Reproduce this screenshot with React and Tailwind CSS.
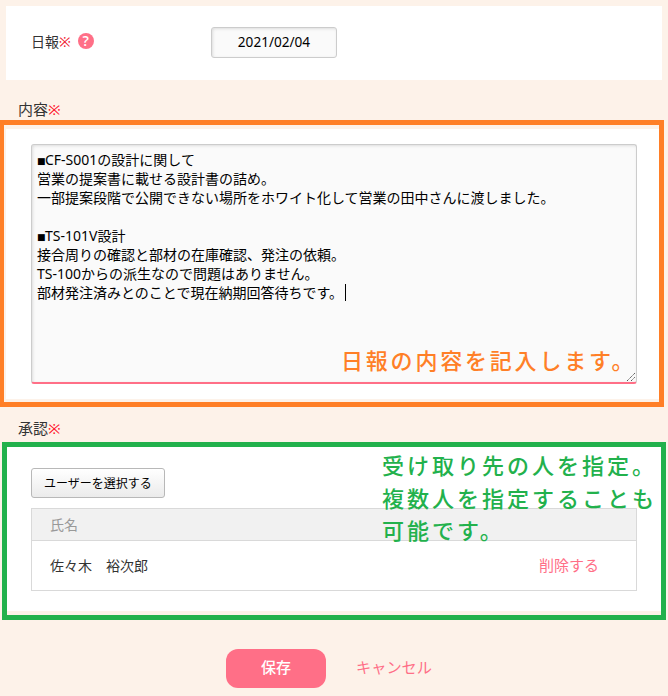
import React from "react";

const report = [
  { mark: true, text: "CF-S001の設計に関して" },
  { text: "営業の提案書に載せる設計書の詰め。" },
  { text: "一部提案段階で公開できない場所をホワイト化して営業の田中さんに渡しました。" },
  { text: "" },
  { mark: true, text: "TS-101V設計" },
  { text: "接合周りの確認と部材の在庫確認、発注の依頼。" },
  { text: "TS-100からの派生なので問題はありません。" },
  { text: "部材発注済みとのことで現在納期回答待ちです。", caret: true },
];

function SectionLabel({ children }) {
  return (
    <div className="flex h-5 items-center pl-[18px] text-[15px] leading-5 text-[#333]">
      <span>{children}</span>
      <span className="text-[15px] text-[#ff0a1e]">※</span>
    </div>
  );
}

function DateCard() {
  return (
    <section className="mx-1.5 flex h-[74px] items-start bg-white pl-[25px] pt-[21px]">
      <div className="flex h-7 w-[180px] items-center text-[14px] text-[#333]">
        <span>日報</span>
        <span className="text-[#f0142d]">※</span>
        <span className="ml-[5px] flex h-4 w-4 translate-x-0.5 items-center justify-center rounded-full bg-[#ff6f87] font-['Open_Sans'] text-[14px] font-semibold leading-4 text-white">
          ?
        </span>
      </div>
      <div className="flex h-[31px] w-[126px] items-center justify-center rounded-[3px] border border-[#ccc] bg-[#fafafa] text-[13.6px] text-black shadow-[inset_1px_1px_3px_#ddd]">
        2021/02/04
      </div>
    </section>
  );
}

function Editor() {
  return (
    <section className="relative mx-1.5 mt-[9px] h-[270px] bg-white px-[25px] pt-[15px]">
      <div className="relative h-[240px] rounded-[3px] border border-b-2 border-[#ccc] border-b-[#ff6f87] bg-[#fafafa] pl-[5px] pt-[5px] text-[14px] leading-[19px] text-black shadow-[inset_1px_1px_3px_#ddd]">
        {report.map((line, i) => (
          <div key={i} className="flex h-[19px] items-center whitespace-nowrap">
            {line.mark && (
              <span className="w-[8px] pt-[3px] font-['DejaVu_Sans'] text-[9px] font-normal leading-none">■</span>
            )}
            <span>{line.text}</span>
            {line.caret && <span className="ml-[2px] h-[17px] w-px bg-black" />}
          </div>
        ))}
        <svg className="absolute bottom-0 right-0 h-[10px] w-[10px]" viewBox="0 0 10 10" stroke="#555" strokeWidth="1">
          <path d="M1 9L9 1M5 9L9 5" strokeDasharray="1.4 0.6" />
        </svg>
      </div>
      <p className="absolute left-[335px] top-[215px] whitespace-nowrap text-[22px] font-medium leading-8 tracking-[2.8px] text-[#ff7f27]">
        日報の内容を記入します。
      </p>
      <div className="pointer-events-none absolute -left-[7px] -top-[9px] h-[287px] w-[665px] border-[5px] border-[#ff7f27]" />
    </section>
  );
}

function Approvers() {
  return (
    <section className="relative mx-1.5 mt-[4px] h-[169px] bg-white px-[25px] pt-[26px]">
      <button className="flex h-[30px] w-[134px] items-center justify-center rounded-[3px] border border-[#b8b8b8] bg-linear-to-b from-white to-[#ebebeb] pt-px text-[12px] text-black">
        ユーザーを選択する
      </button>
      <div className="mt-[10px] border border-[#d9d9d9] text-[14px]">
        <div className="flex h-8 items-center border-b border-[#d9d9d9] bg-[#f1f1f1] pl-[18px] text-[#999]">氏名</div>
        <div className="flex h-[49px] items-center justify-between pl-[18px] pr-[37px] text-[#333]">
          <span>佐々木　裕次郎</span>
          <a className="text-[15px] text-[#ff6f87]">削除する</a>
        </div>
      </div>
      <p className="absolute left-[376px] top-[7px] whitespace-nowrap text-[22px] font-medium leading-[32.5px] tracking-[3px] text-[#22b14c]">
        受け取り先の人を指定。
        <br />
        複数人を指定することも
        <br />
        可能です。
      </p>
      <div className="pointer-events-none absolute -left-1 top-0 h-[178px] w-[664px] border-[5px] border-[#22b14c]" />
    </section>
  );
}

export default function App() {
  return (
    <main className="h-[696px] w-[668px] overflow-hidden bg-[#fdf2e9] pt-1.5 font-['Noto_Sans','Noto_Sans_CJK_JP',sans-serif] font-normal">
      <DateCard />
      <div className="mt-[19px]">
        <SectionLabel>内容</SectionLabel>
      </div>
      <div className="h-px" />
      <Editor />
      <div className="mt-[19px]">
        <SectionLabel>承認</SectionLabel>
      </div>
      <Approvers />
      <div className="mt-[38px] flex items-center pl-[226px]">
        <button className="flex h-[39px] w-[100px] items-center justify-center rounded-[12px] bg-[#ff6f87] pb-[2px] text-[15px] font-medium text-white">
          保存
        </button>
        <a className="ml-[30px] pb-[2px] text-[15.2px] text-[#ff6f87]">キャンセル</a>
      </div>
    </main>
  );
}
